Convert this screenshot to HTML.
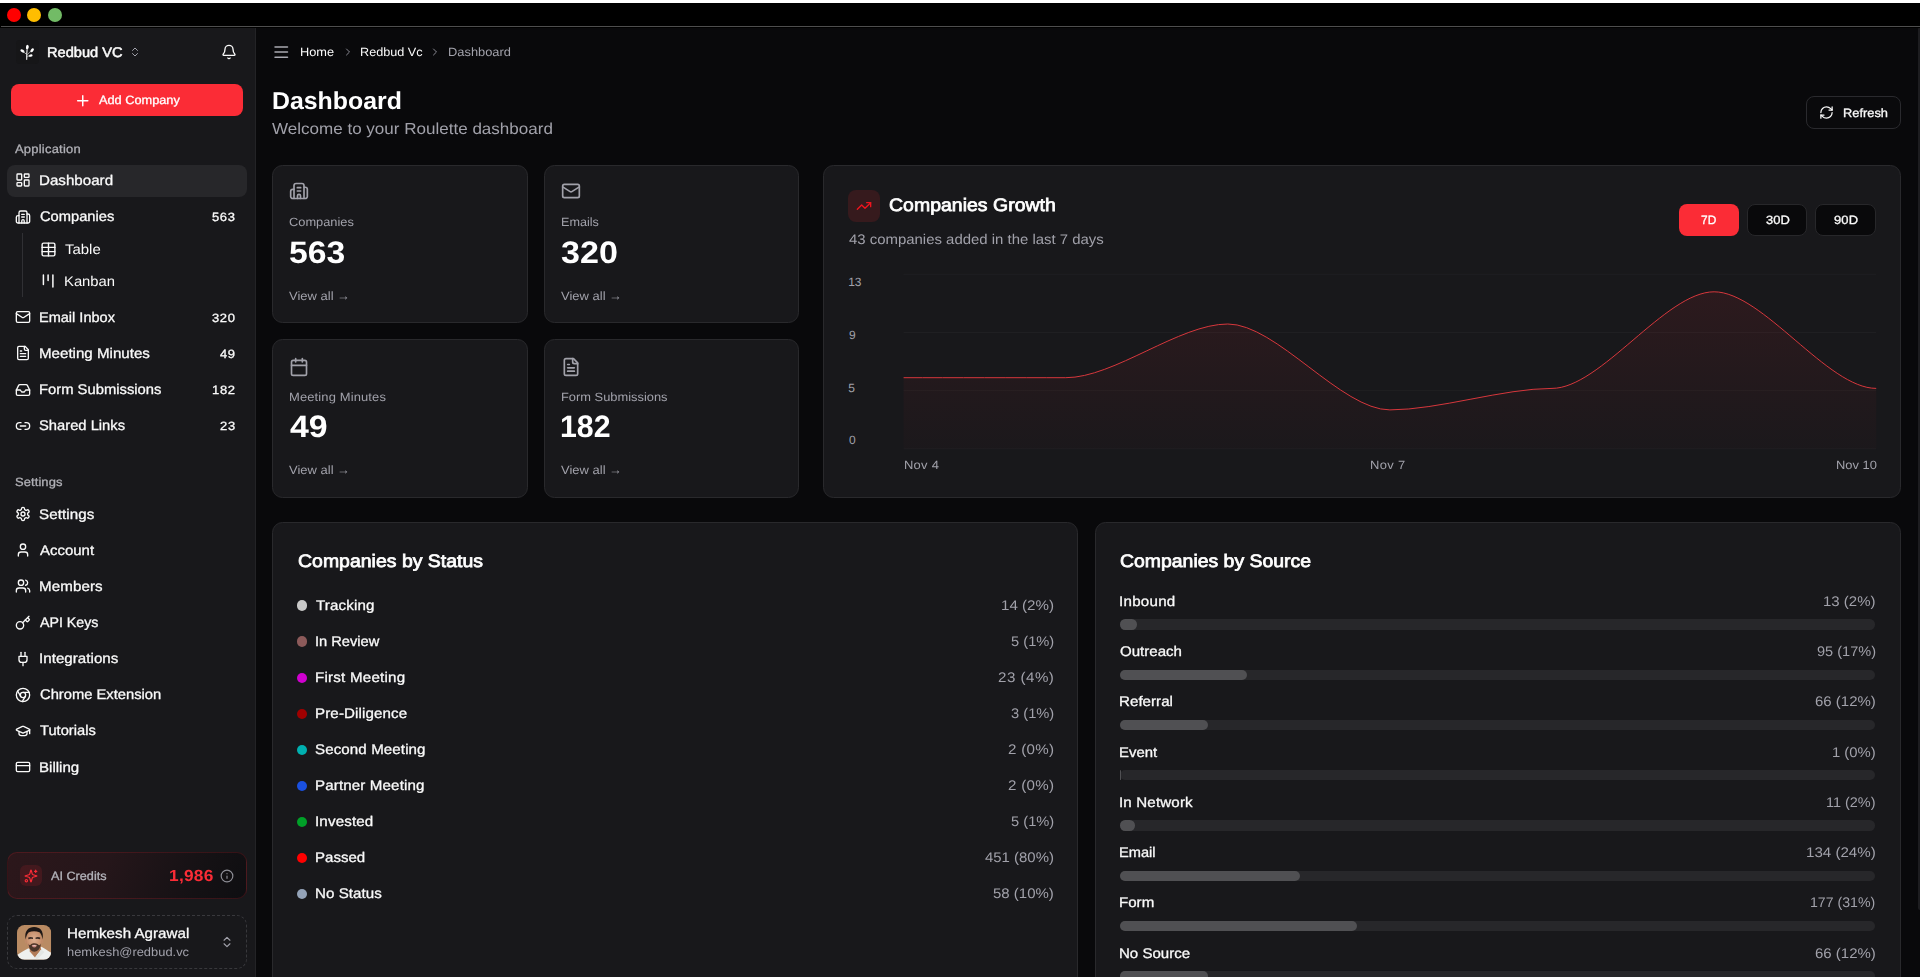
<!DOCTYPE html>
<html lang="en">
<head>
<meta charset="utf-8">
<title>Dashboard - Roulette</title>
<style>
*{box-sizing:border-box;margin:0;padding:0}
html,body{width:1920px;height:977px;overflow:hidden;background:#09090b}
body{position:relative;font-family:"Liberation Sans",Arial,sans-serif;color:#fafafa;-webkit-font-smoothing:antialiased;text-rendering:geometricPrecision}
.abs{position:absolute}
svg{display:block;overflow:visible}
.ic{position:absolute;fill:none;stroke:currentColor;stroke-width:2;stroke-linecap:round;stroke-linejoin:round}
.t{position:absolute;white-space:nowrap;line-height:1;transform-origin:0 50%}
.md{-webkit-text-stroke:0.3px currentColor}
.sb{font-weight:bold}
.sm{-webkit-text-stroke:0.75px currentColor}
.sm4{-webkit-text-stroke:0.5px currentColor}
/* window chrome */
#topwhite{left:0;top:0;width:1920px;height:3px;background:#fff}
#titlebar{left:0;top:3px;width:1920px;height:25px;background:#000}
#titleline{left:1px;top:26px;width:1919px;height:1px;background:#4e4e4e}
.dot{position:absolute;top:8px;width:14px;height:14px;border-radius:50%}
/* sidebar */
#sidebar{left:0;top:28px;width:256px;height:949px;background:#18181b;border-right:1px solid #232326}
.nav{font-size:14px;left:39px;color:#fafafa}
.sub{font-size:14px;left:65px;color:#fafafa}
.badge{font-size:12px;right:21px;color:#fafafa}
.grp{font-size:12px;left:15px;color:#a8a8ae}
.muted{color:#a1a1aa}
/* main */
.card{position:absolute;background:#18181b;border:1px solid #29292c;border-radius:10.5px}
.bc{font-size:12px;top:46px}
.lbl{font-size:12px;color:#a1a1aa;left:17px;top:50.5px}
.num{font-size:31px;font-weight:bold;left:16px;top:70.5px;color:#fff}
.va{font-size:12px;color:#a1a1aa;left:17px;top:124.5px}
.st{font-size:14px;left:43px;color:#fafafa}
.sv{font-size:14px;right:24px;color:#a1a1aa}
.sdot{position:absolute;left:25px;width:10px;height:10px;border-radius:50%}
.srcl{font-size:14px;left:25px;color:#fafafa}
.track{position:absolute;left:25px;width:755.5px;height:10px;border-radius:5px;background:#27272a;overflow:hidden}
.fill{height:10px;border-radius:5px;background:#4b4b50}
.ya{font-size:12px;color:#a1a1aa;left:848.5px}
.xa{font-size:12px;color:#a1a1aa;top:458.5px}
.btn{position:absolute;top:203.7px;width:60px;height:32px;border-radius:8px;font-size:12px;text-align:center;line-height:32px}
</style>
</head>
<body>
<!-- window chrome -->
<div class="abs" id="topwhite"></div>
<div class="abs" id="titlebar"></div>
<div class="abs" id="titleline"></div>
<div class="dot" style="left:7px;background:#ff0000"></div>
<div class="dot" style="left:27px;background:#ffbd00"></div>
<div class="dot" style="left:48px;background:#72bb66"></div>

<!-- SIDEBAR -->
<div class="abs" id="sidebar"></div>
<div class="abs" style="left:15.500px;top:40.400px;width:23.100px;height:23.400px;border-radius:4px;background:#161618"></div>
<svg class="abs" style="left:16px;top:40px" width="24" height="24" viewBox="16 40 24 24" fill="#fff" stroke="none"><ellipse cx="27.350" cy="47.100" rx="1.400" ry="2.250" transform="rotate(9 27.350 47.100)"/><ellipse cx="22.450" cy="50.950" rx="1.350" ry="2.250" transform="rotate(-58 22.450 50.950)"/><ellipse cx="32.150" cy="50.250" rx="1.350" ry="2.250" transform="rotate(38 32.150 50.250)"/><ellipse cx="30.650" cy="55.550" rx="1.200" ry="1.950" transform="rotate(78 30.650 55.550)"/><path d="M26.700 59.300 C26.500 56.500 26.600 53 27.100 49.600" stroke="#dcdcdc" stroke-width="1.250" fill="none" stroke-linecap="round"/><path d="M26.400 54.300 L23.800 52 M26.900 55.600 C27.800 53.600 29.300 52.300 30.900 51.400 M26.900 57.200 C27.600 56.400 28.400 56 29.300 55.700" stroke="#c8c8c8" stroke-width="0.800" fill="none" stroke-linecap="round"/></svg>
<div class="t sm4" id="t1" style="left:46.92px;top:45.00px;font-size:14px;transform:scaleX(1.0439);">Redbud VC</div>
<svg class="ic" style="left:129.0px;top:46.3px;color:#a1a1aa;" width="12" height="12" viewBox="0 0 24 24" stroke-width="1.9"><path d="m7 15 5 5 5-5"/><path d="m7 9 5-5 5 5"/></svg>
<svg class="ic" style="left:221px;top:44px;color:#fafafa;" width="16" height="16" viewBox="0 0 24 24" stroke-width="1.9"><path d="M10.268 21a2 2 0 0 0 3.464 0"/><path d="M3.262 15.326A1 1 0 0 0 4 17h16a1 1 0 0 0 .740-1.673C19.410 13.956 18 12.499 18 8A6 6 0 0 0 6 8c0 4.499-1.411 5.956-2.738 7.326"/></svg>
<div class="abs" style="left:11px;top:84px;width:232.200px;height:32px;border-radius:8px;background:#fb2c36"></div>
<svg class="ic" style="left:73.75px;top:91.55px;color:#fff;" width="17.5" height="17.5" viewBox="0 0 24 24" stroke-width="1.9"><path d="M5 12h14"/><path d="M12 5v14"/></svg>
<div class="t md" id="t2" style="left:98.66px;top:94.00px;font-size:12px;color:#fff;transform:scaleX(1.0628);">Add Company</div>
<div class="t md" id="t3" style="left:15.11px;top:143.00px;font-size:12px;color:#b0b0b6;letter-spacing:0.213px;transform:scaleX(1.0800);">Application</div>
<div class="abs" style="left:7px;top:164.500px;width:240.300px;height:32px;border-radius:8px;background:#27272a"></div>
<svg class="ic" style="left:15.1px;top:172.4px;color:#fafafa;" width="16" height="16" viewBox="0 0 24 24" stroke-width="2"><rect width="7" height="9" x="3" y="3" rx="1"/><rect width="7" height="5" x="14" y="3" rx="1"/><rect width="7" height="9" x="14" y="12" rx="1"/><rect width="7" height="5" x="3" y="16" rx="1"/></svg>
<div class="t md" id="t4" style="left:38.86px;top:173.00px;font-size:14px;letter-spacing:0.010px;transform:scaleX(1.0800);">Dashboard</div>
<svg class="ic" style="left:15.1px;top:208.5px;color:#fafafa;" width="16" height="16" viewBox="0 0 24 24" stroke-width="2"><path d="M6 21V5.500A2.500 2.500 0 0 1 8.500 3h7A2.500 2.500 0 0 1 18 5.500V21"/><path d="M6 10H4.500A2.500 2.500 0 0 0 2 12.500v6A2.500 2.500 0 0 0 4.500 21h15a2.500 2.500 0 0 0 2.500-2.500V10a2.500 2.500 0 0 0-2.500-2.500H18"/><path d="M10 8h4"/><path d="M10 12h4"/><path d="M10.200 21v-3.200a1.800 1.800 0 0 1 3.600 0V21"/></svg>
<div class="t md" id="t5" style="left:39.72px;top:209.00px;font-size:14px;transform:scaleX(1.0497);">Companies</div>
<div class="t md" id="t6" style="left:211.88px;top:211.00px;font-size:12px;letter-spacing:0.613px;transform:scaleX(1.0800);">563</div>
<svg class="ic" style="left:15.1px;top:309.29999999999995px;color:#fafafa;" width="16" height="16" viewBox="0 0 24 24" stroke-width="2"><rect width="20" height="16" x="2" y="4" rx="2"/><path d="m22 7-8.970 5.700a1.940 1.940 0 0 1-2.060 0L2 7"/></svg>
<div class="t md" id="t7" style="left:38.91px;top:310.00px;font-size:14px;transform:scaleX(1.0377);">Email Inbox</div>
<div class="t md" id="t8" style="left:211.89px;top:312.00px;font-size:12px;letter-spacing:0.587px;transform:scaleX(1.0800);">320</div>
<svg class="ic" style="left:15.1px;top:345.4px;color:#fafafa;" width="16" height="16" viewBox="0 0 24 24" stroke-width="2"><path d="M15 2H6a2 2 0 0 0-2 2v16a2 2 0 0 0 2 2h12a2 2 0 0 0 2-2V7Z"/><path d="M14 2v4a2 2 0 0 0 2 2h4"/><path d="M10 9H8"/><path d="M16 13H8"/><path d="M16 17H8"/></svg>
<div class="t md" id="t9" style="left:38.86px;top:346.00px;font-size:14px;transform:scaleX(1.0797);">Meeting Minutes</div>
<div class="t md" id="t10" style="left:220.00px;top:348.00px;font-size:12px;letter-spacing:0.575px;transform:scaleX(1.0800);">49</div>
<svg class="ic" style="left:15.1px;top:381.5px;color:#fafafa;" width="16" height="16" viewBox="0 0 24 24" stroke-width="2"><polyline points="22 12 16 12 14 15 10 15 8 12 2 12"/><path d="M5.450 5.110 2 12v6a2 2 0 0 0 2 2h16a2 2 0 0 0 2-2v-6l-3.450-6.890A2 2 0 0 0 16.760 4H7.240a2 2 0 0 0-1.790 1.110z"/></svg>
<div class="t md" id="t11" style="left:38.88px;top:382.00px;font-size:14px;transform:scaleX(1.0558);">Form Submissions</div>
<div class="t md" id="t12" style="left:211.77px;top:384.00px;font-size:12px;letter-spacing:0.646px;transform:scaleX(1.0800);">182</div>
<svg class="ic" style="left:15.1px;top:417.59999999999997px;color:#fafafa;" width="16" height="16" viewBox="0 0 24 24" stroke-width="2"><path d="M9 17H7A5 5 0 0 1 7 7h2"/><path d="M15 7h2a5 5 0 1 1 0 10h-2"/><line x1="8" x2="16" y1="12" y2="12"/></svg>
<div class="t md" id="t13" style="left:38.90px;top:418.00px;font-size:14px;transform:scaleX(1.0531);">Shared Links</div>
<div class="t md" id="t14" style="left:219.89px;top:420.00px;font-size:12px;letter-spacing:0.683px;transform:scaleX(1.0800);">23</div>
<svg class="ic" style="left:15.1px;top:506.1px;color:#fafafa;" width="16" height="16" viewBox="0 0 24 24" stroke-width="2"><path d="M12.220 2h-.440a2 2 0 0 0-2 2v.180a2 2 0 0 1-1 1.730l-.430.250a2 2 0 0 1-2 0l-.150-.080a2 2 0 0 0-2.730.730l-.220.380a2 2 0 0 0 .730 2.730l.150.100a2 2 0 0 1 1 1.720v.510a2 2 0 0 1-1 1.740l-.150.090a2 2 0 0 0-.730 2.730l.220.380a2 2 0 0 0 2.730.730l.150-.080a2 2 0 0 1 2 0l.430.250a2 2 0 0 1 1 1.730V20a2 2 0 0 0 2 2h.440a2 2 0 0 0 2-2v-.180a2 2 0 0 1 1-1.730l.430-.250a2 2 0 0 1 2 0l.150.080a2 2 0 0 0 2.730-.730l.220-.390a2 2 0 0 0-.730-2.730l-.150-.080a2 2 0 0 1-1-1.740v-.500a2 2 0 0 1 1-1.740l.150-.090a2 2 0 0 0 .730-2.730l-.220-.380a2 2 0 0 0-2.730-.730l-.150.080a2 2 0 0 1-2 0l-.430-.250a2 2 0 0 1-1-1.730V4a2 2 0 0 0-2-2z"/><circle cx="12" cy="12" r="3"/></svg>
<div class="t md" id="t15" style="left:38.87px;top:507.00px;font-size:14px;letter-spacing:0.076px;transform:scaleX(1.0800);">Settings</div>
<svg class="ic" style="left:15.1px;top:542.1999999999999px;color:#fafafa;" width="16" height="16" viewBox="0 0 24 24" stroke-width="2"><path d="M19 21v-2a4 4 0 0 0-4-4H9a4 4 0 0 0-4 4v2"/><circle cx="12" cy="7" r="4"/></svg>
<div class="t md" id="t16" style="left:39.92px;top:543.00px;font-size:14px;transform:scaleX(1.0688);">Account</div>
<svg class="ic" style="left:15.1px;top:578.3px;color:#fafafa;" width="16" height="16" viewBox="0 0 24 24" stroke-width="2"><path d="M16 21v-2a4 4 0 0 0-4-4H6a4 4 0 0 0-4 4v2"/><circle cx="9" cy="7" r="4"/><path d="M22 21v-2a4 4 0 0 0-3-3.870"/><path d="M16 3.130a4 4 0 0 1 0 7.750"/></svg>
<div class="t md" id="t17" style="left:38.86px;top:579.00px;font-size:14px;letter-spacing:0.092px;transform:scaleX(1.0800);">Members</div>
<svg class="ic" style="left:15.1px;top:614.5px;color:#fafafa;" width="16" height="16" viewBox="0 0 24 24" stroke-width="2"><path d="m15.500 7.500 2.300 2.300a1 1 0 0 0 1.400 0l2.100-2.100a1 1 0 0 0 0-1.400L19 4"/><path d="m21 2-9.600 9.600"/><circle cx="7.500" cy="15.500" r="5.500"/></svg>
<div class="t md" id="t18" style="left:39.92px;top:615.00px;font-size:14px;transform:scaleX(1.0144);">API Keys</div>
<svg class="ic" style="left:15.1px;top:650.6px;color:#fafafa;" width="16" height="16" viewBox="0 0 24 24" stroke-width="2"><path d="M12 22v-5"/><path d="M9 8V2"/><path d="M15 8V2"/><path d="M18 8v5a4 4 0 0 1-4 4h-4a4 4 0 0 1-4-4V8Z"/></svg>
<div class="t md" id="t19" style="left:38.83px;top:651.00px;font-size:14px;letter-spacing:0.027px;transform:scaleX(1.0800);">Integrations</div>
<svg class="ic" style="left:15.1px;top:686.6999999999999px;color:#fafafa;" width="16" height="16" viewBox="0 0 24 24" stroke-width="2"><circle cx="12" cy="12" r="10"/><circle cx="12" cy="12" r="4"/><line x1="21.170" x2="12" y1="8" y2="8"/><line x1="3.950" x2="8.540" y1="6.060" y2="14"/><line x1="10.880" x2="15.460" y1="21.940" y2="14"/></svg>
<div class="t md" id="t20" style="left:39.72px;top:687.00px;font-size:14px;transform:scaleX(1.0524);">Chrome Extension</div>
<svg class="ic" style="left:15.1px;top:722.8px;color:#fafafa;" width="16" height="16" viewBox="0 0 24 24" stroke-width="2"><path d="M21.420 10.922a1 1 0 0 0-.019-1.838L12.830 5.180a2 2 0 0 0-1.660 0L2.600 9.080a1 1 0 0 0 0 1.832l8.570 3.908a2 2 0 0 0 1.660 0z"/><path d="M22 10v6"/><path d="M6 12.500V16a6 3 0 0 0 12 0v-3.500"/></svg>
<div class="t md" id="t21" style="left:39.79px;top:723.00px;font-size:14px;transform:scaleX(1.0491);">Tutorials</div>
<svg class="ic" style="left:15.1px;top:758.9px;color:#fafafa;" width="16" height="16" viewBox="0 0 24 24" stroke-width="2"><rect width="20" height="14" x="2" y="5" rx="2"/><line x1="2" x2="22" y1="10" y2="10"/></svg>
<div class="t md" id="t22" style="left:38.87px;top:760.00px;font-size:14px;transform:scaleX(1.0763);">Billing</div>
<div class="abs" style="left:22px;top:233px;width:1px;height:64px;background:#303034"></div>
<svg class="ic" style="left:39.7px;top:240.9px;color:#fafafa;" width="17" height="17" viewBox="0 0 24 24" stroke-width="1.9"><path d="M12 3v18"/><rect width="18" height="18" x="3" y="3" rx="2"/><path d="M3 9h18"/><path d="M3 15h18"/></svg>
<div class="t " id="t23" style="left:64.97px;top:242.00px;font-size:14px;transform:scaleX(1.0673);">Table</div>
<svg class="abs" style="left:40px;top:272px" width="16" height="18" viewBox="0 0 16 18" fill="none" stroke="#fafafa" stroke-width="1.500" stroke-linecap="round"><path d="M3.400 2.900V12.400M8.100 2.900V8.400M12.900 2.900V15.100"/></svg>
<div class="t " id="t24" style="left:63.64px;top:274.00px;font-size:14px;transform:scaleX(1.0584);">Kanban</div>
<div class="t md" id="t25" style="left:15.05px;top:476.00px;font-size:12px;color:#b0b0b6;letter-spacing:0.078px;transform:scaleX(1.0800);">Settings</div>
<div class="abs" style="left:7px;top:852.300px;width:240.200px;height:46.500px;border-radius:10px;border:1px solid rgba(251,44,54,0.170);background:linear-gradient(115deg,#2c171b 0%,#25161a 40%,#141114 80%,#0e0e11 100%)"></div>
<div class="abs" style="left:20.300px;top:864.700px;width:21.600px;height:21.600px;border-radius:6px;background:rgba(251,44,54,0.120)"></div>
<svg class="ic" style="left:24.2px;top:868.5px;color:#fb2c36;" width="14" height="14" viewBox="0 0 24 24" stroke-width="2"><path d="M9.937 15.500A2 2 0 0 0 8.500 14.063l-6.135-1.582a.500.500 0 0 1 0-.962L8.500 9.936A2 2 0 0 0 9.937 8.500l1.582-6.135a.500.500 0 0 1 .963 0L14.063 8.500A2 2 0 0 0 15.500 9.937l6.135 1.581a.500.500 0 0 1 0 .964L15.500 14.063a2 2 0 0 0-1.437 1.437l-1.582 6.135a.500.500 0 0 1-.963 0z"/><path d="M20 2v4"/><path d="M22 4h-4"/><circle cx="4" cy="20" r="2"/></svg>
<div class="t md" id="t26" style="left:50.52px;top:870.00px;font-size:12px;color:#b4b4bb;transform:scaleX(1.0549);">AI Credits</div>
<div class="t sb" id="t27" style="left:169.16px;top:869.00px;font-size:16px;color:#fb2c36;letter-spacing:0.257px;transform:scaleX(1.0800);">1,986</div>
<svg class="ic" style="left:220px;top:868.5px;color:#8e8e96;" width="14" height="14" viewBox="0 0 24 24" stroke-width="1.8"><circle cx="12" cy="12" r="10"/><path d="M12 16v-4"/><path d="M12 8h.010"/></svg>
<div class="abs" style="left:7px;top:915px;width:240px;height:54px;border-radius:10px;border:1px dashed #38383c"></div>
<svg class="abs" style="left:17px;top:924.500px" width="34.200" height="34.700" viewBox="0 0 34.200 34.700"><defs><clipPath id="avc"><rect width="34.200" height="34.700" rx="7.600"/></clipPath><filter id="avb" x="-10%" y="-10%" width="120%" height="120%"><feGaussianBlur stdDeviation="0.550"/></filter><radialGradient id="avs" cx="0.500" cy="0.450" r="0.600"><stop offset="0" stop-color="#dcae90"/><stop offset="0.700" stop-color="#c9926f"/><stop offset="1" stop-color="#b57f5e"/></radialGradient></defs><g clip-path="url(#avc)"><rect width="34.200" height="34.700" fill="#b98b63"/><g filter="url(#avb)"><path d="M0 34.700 L0 30 C3 28 7 25.500 11.500 23.200 L16 26 L24.500 21.800 C27 23 31 26 34.200 27.800 L34.200 34.700Z" fill="#eef0ee"/><path d="M12.500 22 L23.500 21 L24.200 24.500 L18 32.500 L12.800 26.500Z" fill="#b27c58"/><path d="M18 32.500 L24.200 24.500 L27.500 27 L20 34.700Z" fill="#e3e6e3"/><ellipse cx="8.900" cy="15.800" rx="1.100" ry="2.600" fill="#c08a68"/><ellipse cx="25.400" cy="15.800" rx="1.100" ry="2.600" fill="#c08a68"/><ellipse cx="17.100" cy="15.600" rx="7.700" ry="10.300" fill="url(#avs)"/><path d="M11.600 18.500 C11.800 24 14.500 26.700 17.300 26.700 C20.200 26.700 23.600 24 24 18.200 C23 21 21.500 20.300 20.600 19 C19 18 15.600 18 14.300 19 C13.400 20.300 12.300 21 11.600 18.500Z" fill="#4a3429"/><path d="M14.700 20 Q17.300 19.300 19.900 20 Q19.500 22.600 17.300 22.600 Q15.100 22.600 14.700 20Z" fill="#c98b82"/><path d="M15.200 20.300 Q17.300 20 19.400 20.300 Q17.300 21.600 15.200 20.300Z" fill="#ecd9d2"/><path d="M11.200 12.600 Q13.500 11.300 16 12.500 L16 14 Q13.500 13.600 11.400 14.200Z M18.600 12.500 Q21 11.300 23.300 12.600 L23.100 14.200 Q21 13.600 18.600 14Z" fill="#3a2a23"/><path d="M8.700 14.500 C6.800 5.500 12 1.900 17.200 2 C22.500 2 27.300 5.500 25.500 14.500 C25 11 24 8.500 22.500 7.200 C19 6 15 6 11.800 7.200 C10.200 8.500 9.300 11 8.700 14.500Z" fill="#1c1614"/></g></g></svg>
<div class="t md" id="t28" style="left:67.26px;top:926.00px;font-size:14px;letter-spacing:0.028px;transform:scaleX(1.0800);">Hemkesh Agrawal</div>
<div class="t " id="t29" style="left:67.28px;top:946.00px;font-size:12px;color:#a1a1aa;transform:scaleX(1.0745);">hemkesh@redbud.vc</div>
<svg class="ic" style="left:219.8px;top:935px;color:#a1a1aa;" width="14" height="14" viewBox="0 0 24 24" stroke-width="1.7"><path d="m7 15 5 5 5-5"/><path d="m7 9 5-5 5 5"/></svg>

<!-- MAIN -->
<svg class="abs" style="left:274px;top:45px" width="15" height="14" viewBox="0 0 15 14" stroke="#a9a9b1" stroke-width="1.500" stroke-linecap="round"><path d="M1 1.900H13.500M1 7.100H13.500M1 12.300H13.500"/></svg>
<div class="t " id="t30" style="left:299.87px;top:46.00px;font-size:12px;color:#fafafa;transform:scaleX(1.0658);">Home</div>
<svg class="ic" style="left:341.6px;top:46.1px;color:#8a8a93;" width="12" height="12" viewBox="0 0 24 24" stroke-width="1.7"><path d="m9 18 6-6-6-6"/></svg>
<div class="t " id="t31" style="left:359.79px;top:46.00px;font-size:12px;color:#fafafa;transform:scaleX(1.0548);">Redbud Vc</div>
<svg class="ic" style="left:429.4px;top:46.1px;color:#8a8a93;" width="12" height="12" viewBox="0 0 24 24" stroke-width="1.7"><path d="m9 18 6-6-6-6"/></svg>
<div class="t " id="t32" style="left:447.68px;top:46.00px;font-size:12px;color:#a1a1aa;transform:scaleX(1.0722);">Dashboard</div>
<div class="t sb" id="t33" style="left:271.99px;top:90.00px;font-size:24.4px;color:#fff;transform:scaleX(1.0190);">Dashboard</div>
<div class="t " id="t34" style="left:272.37px;top:122.00px;font-size:16px;color:#a1a1aa;transform:scaleX(1.0646);">Welcome to your Roulette dashboard</div>
<div class="abs" style="left:1806px;top:96px;width:95px;height:32.500px;border-radius:8px;border:1px solid #2a2a2e;background:#0a0a0c"></div>
<svg class="ic" style="left:1819.2px;top:104.8px;color:#fafafa;" width="15" height="15" viewBox="0 0 24 24" stroke-width="2"><path d="M3 12a9 9 0 0 1 9-9 9.750 9.750 0 0 1 6.740 2.740L21 8"/><path d="M21 3v5h-5"/><path d="M21 12a9 9 0 0 1-9 9 9.750 9.750 0 0 1-6.740-2.740L3 16"/><path d="M8 16H3v5"/></svg>
<div class="t md" id="t35" style="left:1842.89px;top:107.00px;font-size:12px;transform:scaleX(1.0708);">Refresh</div>
<div class="card" style="left:272px;top:164.5px;width:255.9px;height:158.600px"></div>
<svg class="ic" style="left:289.4px;top:181.4px;color:#a1a1aa;" width="20" height="20" viewBox="0 0 24 24" stroke-width="2"><path d="M6 21V5.500A2.500 2.500 0 0 1 8.500 3h7A2.500 2.500 0 0 1 18 5.500V21"/><path d="M6 10H4.500A2.500 2.500 0 0 0 2 12.500v6A2.500 2.500 0 0 0 4.500 21h15a2.500 2.500 0 0 0 2.500-2.500V10a2.500 2.500 0 0 0-2.500-2.500H18"/><path d="M10 8h4"/><path d="M10 12h4"/><path d="M10.200 21v-3.200a1.800 1.800 0 0 1 3.600 0V21"/></svg>
<div class="t " id="t36" style="left:289.28px;top:216.00px;font-size:12px;color:#a1a1aa;transform:scaleX(1.0695);">Companies</div>
<div class="t sb" id="t37" style="left:289.01px;top:237.00px;font-size:31px;color:#fff;transform:scaleX(1.0871);">563</div>
<div class="t " id="t38" style="left:289.06px;top:290.00px;font-size:12px;color:#a1a1aa;letter-spacing:0.024px;transform:scaleX(1.0800);">View all</div>
<div class="t " id="t39" style="left:337.29px;top:290.00px;font-size:12px;color:#a1a1aa;transform:scaleX(1.0800);">→</div>
<div class="card" style="left:544px;top:164.5px;width:254.9px;height:158.600px"></div>
<svg class="ic" style="left:561.4px;top:181.4px;color:#a1a1aa;" width="20" height="20" viewBox="0 0 24 24" stroke-width="2"><rect width="20" height="16" x="2" y="4" rx="2"/><path d="m22 7-8.970 5.700a1.940 1.940 0 0 1-2.060 0L2 7"/></svg>
<div class="t " id="t40" style="left:560.50px;top:216.00px;font-size:12px;color:#a1a1aa;transform:scaleX(1.0528);">Emails</div>
<div class="t sb" id="t41" style="left:561.06px;top:237.00px;font-size:31px;color:#fff;transform:scaleX(1.0992);">320</div>
<div class="t " id="t42" style="left:561.06px;top:290.00px;font-size:12px;color:#a1a1aa;letter-spacing:0.024px;transform:scaleX(1.0800);">View all</div>
<div class="t " id="t43" style="left:609.29px;top:290.00px;font-size:12px;color:#a1a1aa;transform:scaleX(1.0800);">→</div>
<div class="card" style="left:272px;top:339.2px;width:255.9px;height:158.600px"></div>
<svg class="ic" style="left:289.4px;top:357.0px;color:#a1a1aa;" width="20" height="20" viewBox="0 0 24 24" stroke-width="2"><path d="M8 2v4"/><path d="M16 2v4"/><rect width="18" height="18" x="3" y="4" rx="2"/><path d="M3 10h18"/></svg>
<div class="t " id="t44" style="left:289.04px;top:391.00px;font-size:12px;color:#a1a1aa;letter-spacing:0.119px;transform:scaleX(1.0800);">Meeting Minutes</div>
<div class="t sb" id="t45" style="left:289.96px;top:411.00px;font-size:31px;color:#fff;transform:scaleX(1.0921);">49</div>
<div class="t " id="t46" style="left:289.06px;top:464.00px;font-size:12px;color:#a1a1aa;letter-spacing:0.024px;transform:scaleX(1.0800);">View all</div>
<div class="t " id="t47" style="left:337.29px;top:464.00px;font-size:12px;color:#a1a1aa;transform:scaleX(1.0800);">→</div>
<div class="card" style="left:544px;top:339.2px;width:254.9px;height:158.600px"></div>
<svg class="ic" style="left:561.4px;top:357.0px;color:#a1a1aa;" width="20" height="20" viewBox="0 0 24 24" stroke-width="2"><path d="M15 2H6a2 2 0 0 0-2 2v16a2 2 0 0 0 2 2h12a2 2 0 0 0 2-2V7Z"/><path d="M14 2v4a2 2 0 0 0 2 2h4"/><path d="M10 9H8"/><path d="M16 13H8"/><path d="M16 17H8"/></svg>
<div class="t " id="t48" style="left:561.05px;top:391.00px;font-size:12px;color:#a1a1aa;transform:scaleX(1.0722);">Form Submissions</div>
<div class="t sb" id="t49" style="left:559.80px;top:411.00px;font-size:31px;color:#fff;transform:scaleX(0.9779);">182</div>
<div class="t " id="t50" style="left:561.06px;top:464.00px;font-size:12px;color:#a1a1aa;letter-spacing:0.024px;transform:scaleX(1.0800);">View all</div>
<div class="t " id="t51" style="left:609.29px;top:464.00px;font-size:12px;color:#a1a1aa;transform:scaleX(1.0800);">→</div>
<div class="card" style="left:822.800px;top:164.500px;width:1078px;height:333.500px"></div>
<div class="abs" style="left:848px;top:190px;width:32px;height:31.500px;border-radius:8px;background:#361a1d"></div>
<svg class="ic" style="left:856.3px;top:198px;color:#f0141e;" width="16" height="16" viewBox="0 0 24 24" stroke-width="2"><polyline points="22 7 13.500 15.500 8.500 10.500 2 17"/><polyline points="16 7 22 7 22 13"/></svg>
<div class="t sm" id="t52" style="left:888.83px;top:196.00px;font-size:18px;color:#fff;letter-spacing:0.028px;transform:scaleX(1.0800);">Companies Growth</div>
<div class="t " id="t53" style="left:848.85px;top:232.00px;font-size:14px;color:#a1a1aa;transform:scaleX(1.0664);">43 companies added in the last 7 days</div>
<div class="btn" style="left:1679px;width:60.300px;background:#fb2c36"></div>
<div class="btn" style="left:1747px;width:60px;background:#09090b;border:1px solid #27272a"></div>
<div class="btn" style="left:1815.400px;width:60.300px;background:#09090b;border:1px solid #27272a"></div>
<div class="t md" id="t54" style="left:1701.46px;top:214.00px;font-size:12px;color:#fff;transform:scaleX(0.9928);">7D</div>
<div class="t md" id="t55" style="left:1766.03px;top:214.00px;font-size:12px;color:#fafafa;letter-spacing:0.025px;transform:scaleX(1.0800);">30D</div>
<div class="t md" id="t56" style="left:1833.58px;top:214.00px;font-size:12px;color:#fafafa;letter-spacing:0.122px;transform:scaleX(1.0800);">90D</div>
<div class="t " id="t57" style="left:848.16px;top:276.00px;font-size:12px;color:#a1a1aa;">13</div>
<div class="t " id="t58" style="left:848.91px;top:329.00px;font-size:12px;color:#a1a1aa;">9</div>
<div class="t " id="t59" style="left:848.17px;top:382.00px;font-size:12px;color:#a1a1aa;">5</div>
<div class="t " id="t60" style="left:848.96px;top:434.00px;font-size:12px;color:#a1a1aa;">0</div>
<div class="t " id="t61" style="left:903.77px;top:459.00px;font-size:12px;color:#a1a1aa;letter-spacing:0.244px;transform:scaleX(1.0800);">Nov 4</div>
<div class="t " id="t62" style="left:1369.87px;top:459.00px;font-size:12px;color:#a1a1aa;letter-spacing:0.289px;transform:scaleX(1.0800);">Nov 7</div>
<div class="t " id="t63" style="left:1835.67px;top:459.00px;font-size:12px;color:#a1a1aa;transform:scaleX(1.0752);">Nov 10</div>
<svg class="abs" style="left:0;top:0" width="1920" height="977" viewBox="0 0 1920 977" fill="none"><defs><linearGradient id="cg" x1="0" y1="291.8" x2="0" y2="448.8" gradientUnits="userSpaceOnUse"><stop offset="0" stop-color="#fb2c36" stop-opacity="0.090"/><stop offset="1" stop-color="#fb2c36" stop-opacity="0.015"/></linearGradient></defs><path d="M903.6 274.3H1876.2" stroke="#1f1f22" stroke-width="1"/><path d="M903.6 332.5H1876.2" stroke="#1f1f22" stroke-width="1"/><path d="M903.6 390.6H1876.2" stroke="#1f1f22" stroke-width="1"/><path d="M903.6 448.8H1876.2" stroke="#1f1f22" stroke-width="1"/><path d="M903.6 377.7 C952.2 377.7 1017.1 377.7 1065.7 377.7 C1114.3 377.7 1179.2 324.0 1227.8 324.0 C1276.4 324.0 1341.3 409.9 1389.9 409.9 C1438.5 409.9 1503.4 388.4 1552.0 388.4 C1600.6 388.4 1665.5 291.8 1714.1 291.8 C1762.7 291.8 1827.6 388.4 1876.2 388.4 L1876.2 448.8 L903.6 448.8 Z" fill="url(#cg)"/><path d="M903.6 377.7 C952.2 377.7 1017.1 377.7 1065.7 377.7 C1114.3 377.7 1179.2 324.0 1227.8 324.0 C1276.4 324.0 1341.3 409.9 1389.9 409.9 C1438.5 409.9 1503.4 388.4 1552.0 388.4 C1600.6 388.4 1665.5 291.8 1714.1 291.8 C1762.7 291.8 1827.6 388.4 1876.2 388.4" stroke="#d6373c" stroke-width="1"/></svg>
<div class="card" style="left:272px;top:522px;width:806.300px;height:480px"></div>
<div class="t sm" id="t64" style="left:297.63px;top:552.00px;font-size:18px;color:#fff;letter-spacing:0.015px;transform:scaleX(1.0800);">Companies by Status</div>
<div class="abs" style="left:297.200px;top:600.3px;width:10.300px;height:10.300px;border-radius:50%;background:#c8c8c8"></div>
<div class="t md" id="t65" style="left:315.78px;top:598.00px;font-size:14px;letter-spacing:0.128px;transform:scaleX(1.0800);">Tracking</div>
<div class="t " id="t66" style="left:1000.75px;top:598.00px;font-size:14px;color:#a1a1aa;letter-spacing:0.010px;transform:scaleX(1.0800);">14 (2%)</div>
<div class="abs" style="left:297.200px;top:636.4px;width:10.300px;height:10.300px;border-radius:50%;background:#8c5a5a"></div>
<div class="t md" id="t67" style="left:314.86px;top:634.00px;font-size:14px;transform:scaleX(1.0467);">In Review</div>
<div class="t " id="t68" style="left:1010.51px;top:634.00px;font-size:14px;color:#a1a1aa;transform:scaleX(1.0483);">5 (1%)</div>
<div class="abs" style="left:297.200px;top:672.5px;width:10.300px;height:10.300px;border-radius:50%;background:#d000d0"></div>
<div class="t md" id="t69" style="left:314.86px;top:670.00px;font-size:14px;letter-spacing:0.207px;transform:scaleX(1.0800);">First Meeting</div>
<div class="t " id="t70" style="left:997.91px;top:670.00px;font-size:14px;color:#a1a1aa;letter-spacing:0.448px;transform:scaleX(1.0800);">23 (4%)</div>
<div class="abs" style="left:297.200px;top:708.6px;width:10.300px;height:10.300px;border-radius:50%;background:#a00000"></div>
<div class="t md" id="t71" style="left:314.86px;top:706.00px;font-size:14px;letter-spacing:0.110px;transform:scaleX(1.0800);">Pre-Diligence</div>
<div class="t " id="t72" style="left:1010.52px;top:706.00px;font-size:14px;color:#a1a1aa;transform:scaleX(1.0482);">3 (1%)</div>
<div class="abs" style="left:297.200px;top:744.7px;width:10.300px;height:10.300px;border-radius:50%;background:#00b0b0"></div>
<div class="t md" id="t73" style="left:314.87px;top:742.00px;font-size:14px;letter-spacing:0.088px;transform:scaleX(1.0800);">Second Meeting</div>
<div class="t " id="t74" style="left:1007.61px;top:742.00px;font-size:14px;color:#a1a1aa;letter-spacing:0.299px;transform:scaleX(1.0800);">2 (0%)</div>
<div class="abs" style="left:297.200px;top:780.8px;width:10.300px;height:10.300px;border-radius:50%;background:#1a50e0"></div>
<div class="t md" id="t75" style="left:314.86px;top:778.00px;font-size:14px;letter-spacing:0.121px;transform:scaleX(1.0800);">Partner Meeting</div>
<div class="t " id="t76" style="left:1007.61px;top:778.00px;font-size:14px;color:#a1a1aa;letter-spacing:0.299px;transform:scaleX(1.0800);">2 (0%)</div>
<div class="abs" style="left:297.200px;top:816.9px;width:10.300px;height:10.300px;border-radius:50%;background:#00a028"></div>
<div class="t md" id="t77" style="left:314.83px;top:814.00px;font-size:14px;letter-spacing:0.147px;transform:scaleX(1.0800);">Invested</div>
<div class="t " id="t78" style="left:1010.51px;top:814.00px;font-size:14px;color:#a1a1aa;transform:scaleX(1.0483);">5 (1%)</div>
<div class="abs" style="left:297.200px;top:853.0px;width:10.300px;height:10.300px;border-radius:50%;background:#ff0000"></div>
<div class="t md" id="t79" style="left:314.86px;top:850.00px;font-size:14px;transform:scaleX(1.0735);">Passed</div>
<div class="t " id="t80" style="left:985.05px;top:850.00px;font-size:14px;color:#a1a1aa;transform:scaleX(1.0663);">451 (80%)</div>
<div class="abs" style="left:297.200px;top:889.1px;width:10.300px;height:10.300px;border-radius:50%;background:#94a3b8"></div>
<div class="t md" id="t81" style="left:314.86px;top:886.00px;font-size:14px;letter-spacing:0.036px;transform:scaleX(1.0800);">No Status</div>
<div class="t " id="t82" style="left:992.69px;top:886.00px;font-size:14px;color:#a1a1aa;transform:scaleX(1.0708);">58 (10%)</div>
<div class="card" style="left:1094.500px;top:522px;width:806.300px;height:480px"></div>
<div class="t sm" id="t83" style="left:1119.73px;top:552.00px;font-size:18px;color:#fff;transform:scaleX(1.0786);">Companies by Source</div>
<div class="t md" id="t84" style="left:1119.13px;top:594.00px;font-size:14px;letter-spacing:0.241px;transform:scaleX(1.0800);">Inbound</div>
<div class="t " id="t85" style="left:1822.66px;top:594.00px;font-size:14px;color:#a1a1aa;transform:scaleX(1.0707);">13 (2%)</div>
<div class="abs" style="left:1119.800px;top:619.3px;width:755.500px;height:10.300px;border-radius:5.200px;background:#27272a"></div>
<div class="abs" style="left:1119.800px;top:619.3px;width:17.4px;height:10.300px;border-radius:5.200px;background:#505053"></div>
<div class="t md" id="t86" style="left:1120.05px;top:644.00px;font-size:14px;transform:scaleX(1.0760);">Outreach</div>
<div class="t " id="t87" style="left:1816.77px;top:644.00px;font-size:14px;color:#a1a1aa;transform:scaleX(1.0389);">95 (17%)</div>
<div class="abs" style="left:1119.800px;top:669.6px;width:755.500px;height:10.300px;border-radius:5.200px;background:#27272a"></div>
<div class="abs" style="left:1119.800px;top:669.6px;width:127.5px;height:10.300px;border-radius:5.200px;background:#505053"></div>
<div class="t md" id="t88" style="left:1119.16px;top:694.00px;font-size:14px;letter-spacing:0.022px;transform:scaleX(1.0800);">Referral</div>
<div class="t " id="t89" style="left:1815.02px;top:694.00px;font-size:14px;color:#a1a1aa;transform:scaleX(1.0703);">66 (12%)</div>
<div class="abs" style="left:1119.800px;top:719.8px;width:755.500px;height:10.300px;border-radius:5.200px;background:#27272a"></div>
<div class="abs" style="left:1119.800px;top:719.8px;width:88.6px;height:10.300px;border-radius:5.200px;background:#505053"></div>
<div class="t md" id="t90" style="left:1119.18px;top:745.00px;font-size:14px;transform:scaleX(1.0638);">Event</div>
<div class="t " id="t91" style="left:1831.77px;top:745.00px;font-size:14px;color:#a1a1aa;transform:scaleX(1.0591);">1 (0%)</div>
<div class="abs" style="left:1119.800px;top:770.1px;width:755.500px;height:10.300px;border-radius:5.200px;background:#27272a"></div>
<div class="abs" style="left:1119.800px;top:770.1px;width:1.5px;height:10.300px;border-radius:5.200px;background:#505053"></div>
<div class="t md" id="t92" style="left:1119.13px;top:795.00px;font-size:14px;letter-spacing:0.144px;transform:scaleX(1.0800);">In Network</div>
<div class="t " id="t93" style="left:1825.55px;top:795.00px;font-size:14px;color:#a1a1aa;transform:scaleX(1.0308);">11 (2%)</div>
<div class="abs" style="left:1119.800px;top:820.3px;width:755.500px;height:10.300px;border-radius:5.200px;background:#27272a"></div>
<div class="abs" style="left:1119.800px;top:820.3px;width:14.8px;height:10.300px;border-radius:5.200px;background:#505053"></div>
<div class="t md" id="t94" style="left:1119.20px;top:845.00px;font-size:14px;transform:scaleX(1.0438);">Email</div>
<div class="t " id="t95" style="left:1805.95px;top:845.00px;font-size:14px;color:#a1a1aa;transform:scaleX(1.0788);">134 (24%)</div>
<div class="abs" style="left:1119.800px;top:870.6px;width:755.500px;height:10.300px;border-radius:5.200px;background:#27272a"></div>
<div class="abs" style="left:1119.800px;top:870.6px;width:179.8px;height:10.300px;border-radius:5.200px;background:#505053"></div>
<div class="t md" id="t96" style="left:1119.16px;top:895.00px;font-size:14px;transform:scaleX(1.0783);">Form</div>
<div class="t " id="t97" style="left:1810.32px;top:895.00px;font-size:14px;color:#a1a1aa;transform:scaleX(1.0104);">177 (31%)</div>
<div class="abs" style="left:1119.800px;top:920.9px;width:755.500px;height:10.300px;border-radius:5.200px;background:#27272a"></div>
<div class="abs" style="left:1119.800px;top:920.9px;width:237.5px;height:10.300px;border-radius:5.200px;background:#505053"></div>
<div class="t md" id="t98" style="left:1119.16px;top:946.00px;font-size:14px;transform:scaleX(1.0748);">No Source</div>
<div class="t " id="t99" style="left:1815.02px;top:946.00px;font-size:14px;color:#a1a1aa;transform:scaleX(1.0703);">66 (12%)</div>
<div class="abs" style="left:1119.800px;top:971.1px;width:755.500px;height:10.300px;border-radius:5.200px;background:#27272a"></div>
<div class="abs" style="left:1119.800px;top:971.1px;width:88.6px;height:10.300px;border-radius:5.200px;background:#505053"></div>

<div class="abs" style="left:1918px;top:28px;width:2px;height:882px;background:#1d1d20;border-radius:1px 0 0 2px"></div>
</body>
</html>
